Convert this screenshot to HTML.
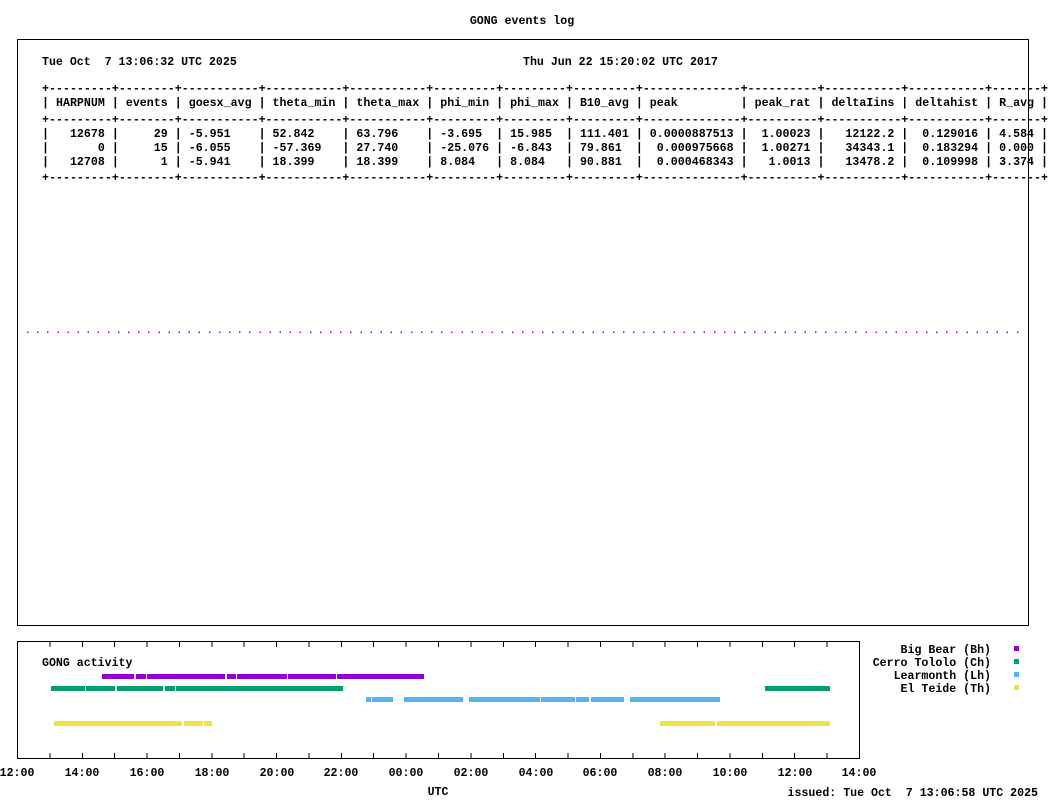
<!DOCTYPE html>
<html><head><meta charset="utf-8"><style>
html,body{margin:0;padding:0;background:#fff;}
svg{display:block;}
text{font-family:"Liberation Mono","DejaVu Sans Mono",monospace;font-size:11.6px;font-weight:bold;fill:#000;white-space:pre;}
</style></head><body>
<svg width="1050" height="800" viewBox="0 0 1050 800" xmlns="http://www.w3.org/2000/svg" shape-rendering="crispEdges">
<rect x="0" y="0" width="1050" height="800" fill="#fff"/>
<text x="522" y="24" text-anchor="middle">GONG events log</text>
<rect x="17.5" y="39.5" width="1011" height="586" fill="none" stroke="#000" stroke-width="1"/>
<text x="42" y="65">Tue Oct  7 13:06:32 UTC 2025</text>
<text x="523" y="65">Thu Jun 22 15:20:02 UTC 2017</text>
<g xml:space="preserve">
<text x="42" y="92" textLength="1006" lengthAdjust="spacing">+---------+--------+-----------+-----------+-----------+---------+---------+---------+--------------+----------+-----------+-----------+-------+</text>
<text x="42" y="106" textLength="1006" lengthAdjust="spacing">| HARPNUM | events | goesx_avg | theta_min | theta_max | phi_min | phi_max | B10_avg | peak         | peak_rat | deltaIins | deltahist | R_avg |</text>
<text x="42" y="123" textLength="1006" lengthAdjust="spacing">+---------+--------+-----------+-----------+-----------+---------+---------+---------+--------------+----------+-----------+-----------+-------+</text>
<text x="42" y="137" textLength="1006" lengthAdjust="spacing">|   12678 |     29 | -5.951    | 52.842    | 63.796    | -3.695  | 15.985  | 111.401 | 0.0000887513 |  1.00023 |   12122.2 |  0.129016 | 4.584 |</text>
<text x="42" y="151" textLength="1006" lengthAdjust="spacing">|       0 |     15 | -6.055    | -57.369   | 27.740    | -25.076 | -6.843  | 79.861  |  0.000975668 |  1.00271 |   34343.1 |  0.183294 | 0.000 |</text>
<text x="42" y="165" textLength="1006" lengthAdjust="spacing">|   12708 |      1 | -5.941    | 18.399    | 18.399    | 8.084   | 8.084   | 90.881  |  0.000468343 |   1.0013 |   13478.2 |  0.109998 | 3.374 |</text>
<text x="42" y="181" textLength="1006" lengthAdjust="spacing">+---------+--------+-----------+-----------+-----------+---------+---------+---------+--------------+----------+-----------+-----------+-------+</text>
</g>
<line x1="27" y1="332" x2="1022" y2="332" stroke="#9400d3" stroke-width="1.5" stroke-dasharray="1.5 8.6"/>

<rect x="17.5" y="641.5" width="842" height="117" fill="none" stroke="#000" stroke-width="1"/>
<g>
<rect x="102" y="674" width="32" height="5" fill="#9400d3"/>
<rect x="136" y="674" width="10" height="5" fill="#9400d3"/>
<rect x="147" y="674" width="78" height="5" fill="#9400d3"/>
<rect x="227" y="674" width="9" height="5" fill="#9400d3"/>
<rect x="237" y="674" width="50" height="5" fill="#9400d3"/>
<rect x="288" y="674" width="48" height="5" fill="#9400d3"/>
<rect x="337" y="674" width="87" height="5" fill="#9400d3"/>

<rect x="51" y="686" width="34" height="5" fill="#009e73"/>
<rect x="86" y="686" width="29" height="5" fill="#009e73"/>
<rect x="117" y="686" width="46" height="5" fill="#009e73"/>
<rect x="165" y="686" width="10" height="5" fill="#009e73"/>
<rect x="176" y="686" width="167" height="5" fill="#009e73"/>
<rect x="765" y="686" width="65" height="5" fill="#009e73"/>

<rect x="366" y="697" width="5" height="5" fill="#56b4e9"/>
<rect x="372" y="697" width="21" height="5" fill="#56b4e9"/>
<rect x="404" y="697" width="59" height="5" fill="#56b4e9"/>
<rect x="469" y="697" width="71" height="5" fill="#56b4e9"/>
<rect x="541" y="697" width="34" height="5" fill="#56b4e9"/>
<rect x="576" y="697" width="13" height="5" fill="#56b4e9"/>
<rect x="591" y="697" width="33" height="5" fill="#56b4e9"/>
<rect x="630" y="697" width="90" height="5" fill="#56b4e9"/>

<rect x="54" y="721" width="128" height="5" fill="#f0e442"/>
<rect x="184" y="721" width="19" height="5" fill="#f0e442"/>
<rect x="204" y="721" width="8" height="5" fill="#f0e442"/>
<rect x="660" y="721" width="55" height="5" fill="#f0e442"/>
<rect x="717" y="721" width="113" height="5" fill="#f0e442"/>
</g>
<text x="42" y="666">GONG activity</text>
<text x="991" y="653" text-anchor="end">Big Bear (Bh)</text>
<text x="991" y="666" text-anchor="end">Cerro Tololo (Ch)</text>
<text x="991" y="679" text-anchor="end">Learmonth (Lh)</text>
<text x="991" y="692" text-anchor="end">El Teide (Th)</text>
<rect x="1014" y="646" width="5" height="5" fill="#9400d3"/>
<rect x="1014" y="659" width="5" height="5" fill="#009e73"/>
<rect x="1014" y="672" width="5" height="5" fill="#56b4e9"/>
<rect x="1014" y="685" width="5" height="5" fill="#f0e442"/>
<text x="438" y="795" text-anchor="middle">UTC</text>
<text x="1038" y="796" text-anchor="end" xml:space="preserve">issued: Tue Oct  7 13:06:58 UTC 2025</text>

<g stroke="#000" stroke-width="1">
<path d="M49.9 642v5M49.9 758v-5M82.3 642v5M82.3 758v-5M114.7 642v5M114.7 758v-5M147.1 642v5M147.1 758v-5M179.4 642v5M179.4 758v-5M211.8 642v5M211.8 758v-5M244.2 642v5M244.2 758v-5M276.6 642v5M276.6 758v-5M309 642v5M309 758v-5M341.4 642v5M341.4 758v-5M373.7 642v5M373.7 758v-5M406.1 642v5M406.1 758v-5M438.5 642v5M438.5 758v-5M470.9 642v5M470.9 758v-5M503.3 642v5M503.3 758v-5M535.6 642v5M535.6 758v-5M568 642v5M568 758v-5M600.4 642v5M600.4 758v-5M632.8 642v5M632.8 758v-5M665.2 642v5M665.2 758v-5M697.6 642v5M697.6 758v-5M729.9 642v5M729.9 758v-5M762.3 642v5M762.3 758v-5M794.7 642v5M794.7 758v-5M827.1 642v5M827.1 758v-5"/>
</g>
<g text-anchor="middle">
<text x="17" y="776">12:00</text>
<text x="82" y="776">14:00</text>
<text x="147" y="776">16:00</text>
<text x="212" y="776">18:00</text>
<text x="277" y="776">20:00</text>
<text x="341" y="776">22:00</text>
<text x="406" y="776">00:00</text>
<text x="471" y="776">02:00</text>
<text x="536" y="776">04:00</text>
<text x="600" y="776">06:00</text>
<text x="665" y="776">08:00</text>
<text x="730" y="776">10:00</text>
<text x="795" y="776">12:00</text>
<text x="859" y="776">14:00</text>
</g>
</svg>
</body></html>
